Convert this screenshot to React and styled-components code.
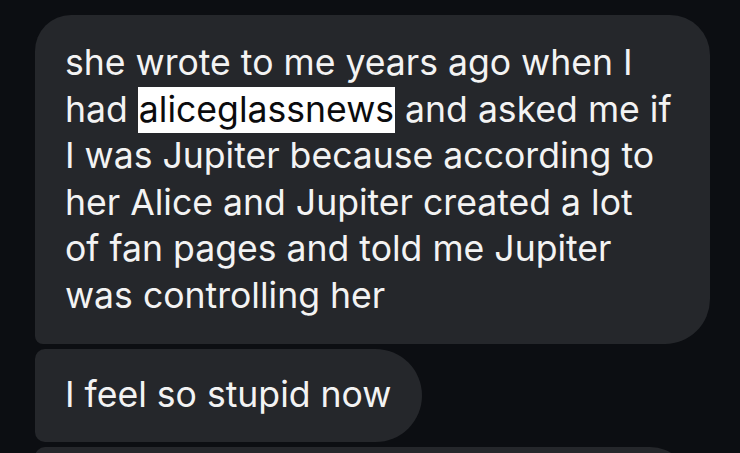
import React from "react";
import styled, { createGlobalStyle } from "styled-components";

const Global = createGlobalStyle`
  html, body {
    margin: 0;
    padding: 0;
    background: #0c0e12;
    overflow: hidden;
  }
  body {
    font-family: Inter, "Noto Sans", "Liberation Sans", sans-serif;
  }
`;

const Thread = styled.div`
  display: flex;
  flex-direction: column;
  align-items: flex-start;
  gap: 5px;
  padding: 15px 0 0 35px;
  height: 453px;
  box-sizing: border-box;
  overflow: hidden;
`;

const Bubble = styled.div`
  box-sizing: border-box;
  background: #25272b;
  color: #f3f3f3;
  font-size: 35.6px;
  line-height: 46.5px;
  width: ${(p) => (p.$width ? `${p.$width}px` : "auto")};
  padding: ${(p) => p.$pad};
  border-radius: ${(p) => p.$radius};
  flex-shrink: 0;
`;

const Highlight = styled.span`
  display: inline-block;
  background: #ffffff;
  color: #0b0b0d;
  padding: 0 1px;
`;

export default function App() {
  return (
    <>
      <Global />
      <Thread>
        <Bubble $width={675} $pad="25px 38px 25px 30px" $radius="36px 40px 45px 8px">
          she wrote to me years ago when I had <Highlight>aliceglassnews</Highlight> and asked
          me if I was Jupiter because according to her Alice and Jupiter created a lot of fan
          pages and told me Jupiter was controlling her
        </Bubble>
        <Bubble $pad="23px 31px 23px 30px" $radius="10px 47px 47px 10px">
          I feel so stupid now
        </Bubble>
        <Bubble $width={655} $pad="23px 30px" $radius="10px 40px 40px 10px">
          &nbsp;
        </Bubble>
      </Thread>
    </>
  );
}
